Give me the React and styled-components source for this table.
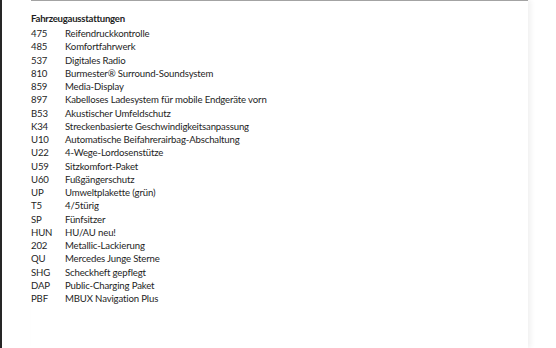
import React from "react";
import styled, { createGlobalStyle } from "styled-components";

const items = [
  ["475", "Reifendruckkontrolle"],
  ["485", "Komfortfahrwerk"],
  ["537", "Digitales Radio"],
  ["810", "Burmester® Surround-Soundsystem"],
  ["859", "Media-Display"],
  ["897", "Kabelloses Ladesystem für mobile Endgeräte vorn"],
  ["B53", "Akustischer Umfeldschutz"],
  ["K34", "Streckenbasierte Geschwindigkeitsanpassung"],
  ["U10", "Automatische Beifahrerairbag-Abschaltung"],
  ["U22", "4-Wege-Lordosenstütze"],
  ["U59", "Sitzkomfort-Paket"],
  ["U60", "Fußgängerschutz"],
  ["UP", "Umweltplakette (grün)"],
  ["T5", "4/5türig"],
  ["SP", "Fünfsitzer"],
  ["HUN", "HU/AU neu!"],
  ["202", "Metallic-Lackierung"],
  ["QU", "Mercedes Junge Sterne"],
  ["SHG", "Scheckheft gepflegt"],
  ["DAP", "Public-Charging Paket"],
  ["PBF", "MBUX Navigation Plus"],
];

const GlobalStyle = createGlobalStyle`
  html, body {
    margin: 0;
    padding: 0;
    background: #fff;
  }
`;

const Viewer = styled.div`
  height: 348px;
  border-left: 2px solid #262626;
  box-sizing: border-box;
  overflow: hidden;
  background: #fff;
`;

const Page = styled.div`
  margin-left: 29px;
  width: 497px;
  height: 100%;
  border-top: 1px solid #a3a3a3;
  box-shadow: 3px 0 5px rgba(0, 0, 0, 0.06);
  padding-top: 11px;
  box-sizing: border-box;
  font-family: Lato, "Open Sans", sans-serif;
  color: #1e1e1e;
  letter-spacing: -0.15px;
`;

const Title = styled.h3`
  margin: 0 0 2px;
  font-size: 9.6px;
  font-weight: 700;
  line-height: 13px;
  letter-spacing: -0.25px;
`;

const List = styled.div`
  display: grid;
  grid-template-columns: 34px 1fr;
  grid-auto-rows: 13.25px;
  font-size: 9.6px;
  line-height: 13.25px;
`;

const Code = styled.span``;
const Label = styled.span`
  white-space: nowrap;
`;

export default function App() {
  return (
    <>
      <GlobalStyle />
      <Viewer>
        <Page>
          <Title>Fahrzeugausstattungen</Title>
          <List>
            {items.map(([code, label]) => (
              <React.Fragment key={code}>
                <Code>{code}</Code>
                <Label>{label}</Label>
              </React.Fragment>
            ))}
          </List>
        </Page>
      </Viewer>
    </>
  );
}
